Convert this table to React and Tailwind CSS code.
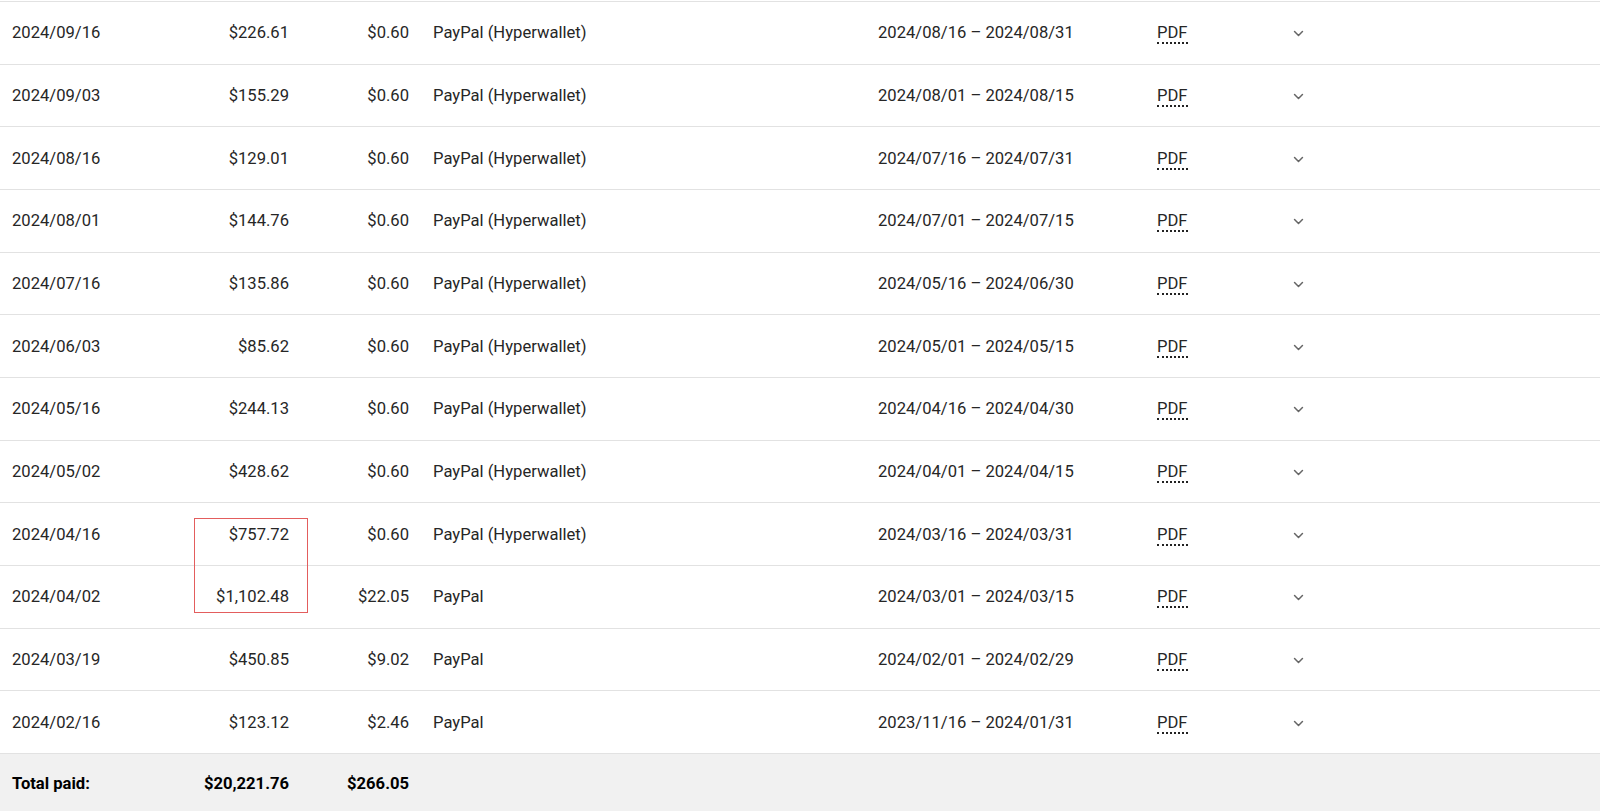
import React from 'react';

const payouts = [
  { date: '2024/09/16', amount: '$226.61', fee: '$0.60', method: 'PayPal (Hyperwallet)', period: '2024/08/16 – 2024/08/31' },
  { date: '2024/09/03', amount: '$155.29', fee: '$0.60', method: 'PayPal (Hyperwallet)', period: '2024/08/01 – 2024/08/15' },
  { date: '2024/08/16', amount: '$129.01', fee: '$0.60', method: 'PayPal (Hyperwallet)', period: '2024/07/16 – 2024/07/31' },
  { date: '2024/08/01', amount: '$144.76', fee: '$0.60', method: 'PayPal (Hyperwallet)', period: '2024/07/01 – 2024/07/15' },
  { date: '2024/07/16', amount: '$135.86', fee: '$0.60', method: 'PayPal (Hyperwallet)', period: '2024/05/16 – 2024/06/30' },
  { date: '2024/06/03', amount: '$85.62', fee: '$0.60', method: 'PayPal (Hyperwallet)', period: '2024/05/01 – 2024/05/15' },
  { date: '2024/05/16', amount: '$244.13', fee: '$0.60', method: 'PayPal (Hyperwallet)', period: '2024/04/16 – 2024/04/30' },
  { date: '2024/05/02', amount: '$428.62', fee: '$0.60', method: 'PayPal (Hyperwallet)', period: '2024/04/01 – 2024/04/15' },
  { date: '2024/04/16', amount: '$757.72', fee: '$0.60', method: 'PayPal (Hyperwallet)', period: '2024/03/16 – 2024/03/31' },
  { date: '2024/04/02', amount: '$1,102.48', fee: '$22.05', method: 'PayPal', period: '2024/03/01 – 2024/03/15' },
  { date: '2024/03/19', amount: '$450.85', fee: '$9.02', method: 'PayPal', period: '2024/02/01 – 2024/02/29' },
  { date: '2024/02/16', amount: '$123.12', fee: '$2.46', method: 'PayPal', period: '2023/11/16 – 2024/01/31' },
];

const Chevron = () => (
  <svg width="19" height="19" viewBox="0 0 24 24" fill="none" stroke="#666" strokeWidth="1.9" strokeLinecap="round" strokeLinejoin="round">
    <path d="m7 9.5 5 5 5-5" />
  </svg>
);

export default function App() {
  return (
    <div className="relative w-[1600px] h-[811px] bg-white overflow-hidden text-[#262626] text-[16.6px]" style={{ fontFamily: 'Roboto, "Liberation Sans", sans-serif' }}>
      <div className="pt-px">
        {payouts.map((p, i) => (
          <div key={i} className="flex items-center h-[62.67px] pt-[2px] border-t border-[#e2e2e2]">
            <div className="w-[180px] pl-[12px]">{p.date}</div>
            <div className="w-[109px] text-right">{p.amount}</div>
            <div className="w-[120px] text-right">{p.fee}</div>
            <div className="w-[469px] pl-[24px]">{p.method}</div>
            <div className="w-[279px]">{p.period}</div>
            <div className="w-[132px]">
              <span className="inline-block leading-[19px] border-b-2 border-dotted border-[#222]">PDF</span>
            </div>
            <div className="w-[19px] flex items-center justify-center">
              <Chevron />
            </div>
          </div>
        ))}
      </div>

      {/* Total footer */}
      <div className="flex items-center h-[58px] pt-[4px] bg-[#f1f1f1] border-t border-[#e2e2e2] font-bold text-black">
        <div className="w-[180px] pl-[12px]">Total paid:</div>
        <div className="w-[109px] text-right">$20,221.76</div>
        <div className="w-[120px] text-right">$266.05</div>
      </div>

      {/* annotation box */}
      <div className="absolute left-[194px] top-[518px] w-[114px] h-[95px] border-[1.5px] border-[#e35d5d]"></div>
    </div>
  );
}
